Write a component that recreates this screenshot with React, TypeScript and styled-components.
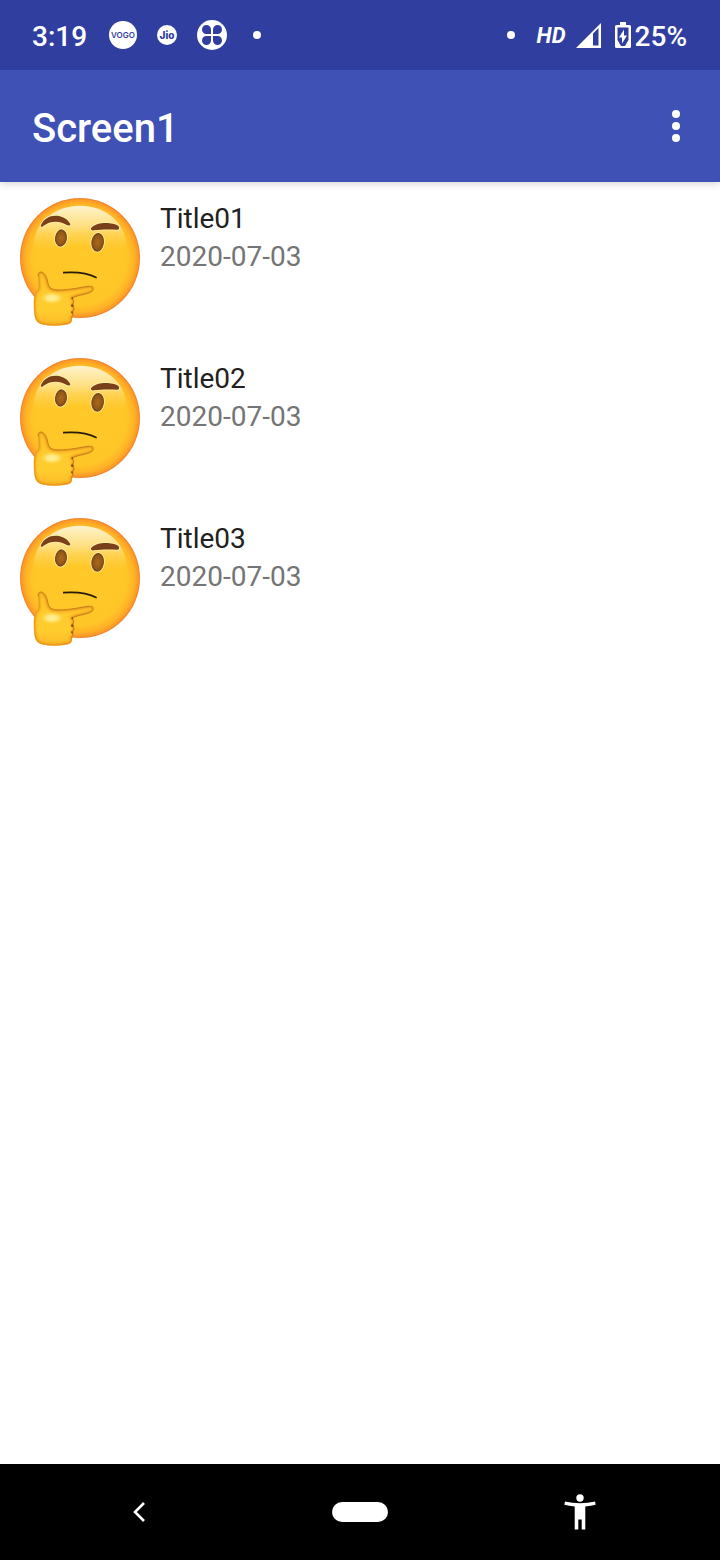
import React from "react";
import styled, { createGlobalStyle } from "styled-components";

const GlobalStyle = createGlobalStyle`
  *, *::before, *::after { box-sizing: border-box; }
  body { margin: 0; background: #fff; font-family: Roboto, "Liberation Sans", sans-serif; }
`;

const Screen = styled.div`
  display: flex;
  flex-direction: column;
  min-height: 100vh;
`;

const StatusBar = styled.div`
  position: relative;
  z-index: 1;
  display: flex;
  align-items: center;
  justify-content: space-between;
  height: 70px;
  padding: 0 32px;
  background: #303f9f;
  color: #fff;
`;

const StatusGroup = styled.div<{ $gap: number }>`
  display: flex;
  align-items: center;
  gap: ${(p) => p.$gap}px;
`;

const StatusText = styled.span`
  font-size: 28px;
  font-weight: 500;
  line-height: 32px;
  padding-top: 4px;
`;

const Clock = styled(StatusText)`
  padding-right: 2px;
`;

const NetworkLabel = styled.span`
  font-size: 22px;
  font-weight: 700;
  font-style: italic;
  line-height: 26px;
  padding: 2px 10px 0 22px;
`;

const Battery = styled.div`
  display: flex;
  align-items: center;
  gap: 4px;
  padding: 0 1px 0 14px;
`;

const Dot = styled.span`
  width: 8px;
  height: 8px;
  border-radius: 50%;
  background: #fff;
`;

const NotificationDot = styled(Dot)`
  margin-left: 6px;
`;

const AppBar = styled.header`
  display: flex;
  align-items: center;
  justify-content: space-between;
  height: 112px;
  padding: 0 20px 0 32px;
  background: #3f51b5;
  color: #fff;
  box-shadow: 0 1px 8px rgba(0, 0, 0, 0.2);
`;

const AppTitle = styled.h1`
  margin: 0;
  padding-top: 6px;
  font-size: 40px;
  font-weight: 500;
  line-height: 48px;
`;

const IconButton = styled.button`
  display: flex;
  align-items: center;
  justify-content: center;
  justify-self: center;
  width: 48px;
  height: 48px;
  padding: 0;
  border: 0;
  background: none;
  color: inherit;
`;

const List = styled.ul`
  flex: 1;
  margin: 0;
  padding: 0;
  list-style: none;
`;

const Item = styled.li`
  display: flex;
  gap: 20px;
  padding: 16px 20px;
`;

const Picture = styled.svg`
  display: block;
  flex: none;
  width: 120px;
  height: 128px;
`;

const ItemText = styled.div`
  padding-top: 2px;
  font-size: 28px;
  line-height: 38px;
`;

const ItemTitle = styled.div`
  color: #212121;
`;

const ItemDate = styled.div`
  color: #757575;
`;

const NavBar = styled.nav`
  display: grid;
  grid-template-columns: repeat(3, 1fr);
  align-items: center;
  height: 96px;
  padding: 0 30px;
  background: #000;
  color: #fff;
`;

const HomePill = styled.span`
  width: 56px;
  height: 20px;
  border-radius: 10px;
  background: #fff;
`;

const HomeButton = styled(IconButton)`
  width: 56px;
`;

const VogoIcon = () => (
  <svg width="28" height="28" viewBox="0 0 28 28">
    <circle cx="14" cy="14" r="14" fill="#fff" />
    <text x="14" y="17" textAnchor="middle" fontFamily="Inter, sans-serif" fontSize="8" fontWeight="600" fill="#303f9f">VOGO</text>
  </svg>
);

const JioIcon = () => (
  <svg width="20" height="20" viewBox="0 0 20 20">
    <circle cx="10" cy="10" r="10" fill="#fff" />
    <text x="10" y="14" textAnchor="middle" fontFamily="Inter, sans-serif" fontSize="10" fontWeight="800" fill="#303f9f">Jio</text>
  </svg>
);

const CloverIcon = () => (
  <svg width="30" height="30" viewBox="0 0 30 30">
    <circle cx="15" cy="15" r="15" fill="#fff" />
    <g fill="#303f9f">
      {[0, 90, 180, 270].map((angle) => (
        <path
          key={angle}
          transform={`rotate(${angle} 15 15)`}
          d="M14 14H9.4A4.5 4.5 0 1 1 14 9.4Z"
        />
      ))}
    </g>
  </svg>
);

const SignalIcon = () => (
  <svg width="25" height="25" viewBox="0 0 25 25">
    <path fill="#fff" fillRule="evenodd" d="M0 25 25 0V25ZM17 10.5V22.5H22.5V5Z" />
  </svg>
);

const BatteryIcon = () => (
  <svg width="16" height="26" viewBox="0 0 16 26">
    <path fill="#fff" d="M5 0h6v3h3.500q1.500 0 1.500 1.500v20q0 1.500-1.500 1.500h-13Q0 26 0 24.500v-20Q0 3 1.500 3H5Z" />
    <path fill="#303f9f" d="M2.500 5.500h11V18L10 24H6l-3.500-6Z" />
    <path fill="#fff" d="M9 7.500 4 15.500H7V21.500L12 13.500H9Z" />
  </svg>
);

const MoreIcon = () => (
  <svg width="8" height="32" viewBox="0 0 8 32" fill="currentColor">
    <circle cx="4" cy="4" r="4" />
    <circle cx="4" cy="16" r="4" />
    <circle cx="4" cy="28" r="4" />
  </svg>
);

const BackIcon = () => (
  <svg width="16" height="20" viewBox="0 0 16 20" fill="none" stroke="currentColor" strokeWidth="2.600">
    <path d="M12 1 3 10l9 9" />
  </svg>
);

const AccessibilityIcon = () => (
  <svg width="32" height="36" viewBox="0 0 32 36" fill="currentColor">
    <circle cx="16" cy="4" r="3.700" />
    <path d="M1 7.500Q8 9.300 16 9.300T31 7.500L31.700 10.700Q27 12 21.300 12.500V35.500H17.700V25.500H14.300V35.500H10.700V12.500Q5 12 .3 10.700Z" />
  </svg>
);

const HAND =
  "M84 257C84 249 88 245 94 246C106 249 111 264 114 279C116 291 122 297 134 299C164 302 197 295 226 290C241 287 250 289 250 296C250 304 239 309 226 312C208 316 193 320 187 324C193 331 194 338 189 345C197 353 196 361 189 366C195 372 194 379 186 383C188 396 181 402 166 404C145 408 121 408 101 404C83 400 75 392 73 371C71 351 70 329 74 315C77 303 88 300 86 286Z";

const ThinkingFace = ({ id }: { id: string }) => {
  const ref = (name: string) => `url(#${name}-${id})`;
  return (
    <Picture viewBox="30 24 360 384" role="img" aria-label="Thinking face">
      <defs>
        <radialGradient id={`face-${id}`} cx="0.5" cy="0.5" r="0.5">
          <stop offset="0" stopColor="#ffc928" />
          <stop offset="0.780" stopColor="#ffc628" />
          <stop offset="0.900" stopColor="#ffb426" />
          <stop offset="0.970" stopColor="#fc9a26" />
          <stop offset="1" stopColor="#ee7d2c" />
        </radialGradient>
        <linearGradient id={`shine-${id}`} x1="0" y1="0" x2="0" y2="1">
          <stop offset="0" stopColor="#fff4d0" />
          <stop offset="0.450" stopColor="#ffe596" stopOpacity="0.850" />
          <stop offset="1" stopColor="#ffcf40" stopOpacity="0.150" />
        </linearGradient>
        <radialGradient id={`eye-${id}`}>
          <stop offset="0" stopColor="#a8681e" />
          <stop offset="0.700" stopColor="#925719" />
          <stop offset="1" stopColor="#704014" />
        </radialGradient>
        <linearGradient id={`hand-${id}`} x1="0" y1="0" x2="0" y2="1">
          <stop offset="0" stopColor="#ffc62a" />
          <stop offset="0.700" stopColor="#ffcd2e" />
          <stop offset="1" stopColor="#fdba26" />
        </linearGradient>
        <radialGradient id={`glow-${id}`}>
          <stop offset="0" stopColor="#fff2a0" />
          <stop offset="0.450" stopColor="#ffec88" stopOpacity="0.850" />
          <stop offset="1" stopColor="#ffd23c" stopOpacity="0" />
        </radialGradient>
        <clipPath id={`hand-clip-${id}`}>
          <path d={HAND} />
        </clipPath>
      </defs>
      <circle cx="210" cy="204" r="180" fill={ref("face")} />
      <path fill={ref("shine")} d="M72 150C84 88 140 47 210 47S336 88 348 150C352 176 326 180 298 174C240 164 180 164 122 174C94 180 68 176 72 150Z" />
      <g stroke="#fff0a8" strokeWidth="5" style={{ paintOrder: "stroke" }}>
        <ellipse cx="153" cy="144" rx="18" ry="26" transform="rotate(7 153 144)" fill={ref("eye")} />
        <ellipse cx="263" cy="157" rx="19" ry="28" transform="rotate(7 263 157)" fill={ref("eye")} />
        <path fill="#79401a" d="M93 105C101 86 119 76 140 77C160 79 174 88 181 102C181 107 176 108 169 104C154 95 137 93 122 97C110 100 103 107 97 110C93 111 91 109 93 105Z" />
        <path fill="#79401a" d="M244 113C256 101 275 98 293 99C308 100 320 103 326 109C329 116 327 119 322 119C296 118 272 118 252 121C244 122 241 118 244 113Z" />
      </g>
      <path d="M159 248C198 245 231 248 260 263" fill="none" stroke="#281c0c" strokeWidth="5" />
      <path d={HAND} fill={ref("hand")} />
      <g clipPath={ref("hand-clip")} fill="none" strokeLinejoin="round">
        <path d={HAND} stroke="#f5a21c" strokeWidth="22" opacity="0.250" />
        <path d={HAND} stroke="#ee951c" strokeWidth="14" opacity="0.300" />
        <path d={HAND} stroke="#df861c" strokeWidth="8" opacity="0.500" />
      </g>
      <path
        fill="none"
        stroke="#b8721c"
        strokeWidth="3"
        strokeLinecap="round"
        opacity="0.750"
        d="M84 257C84 249 88 245 94 246C106 249 111 264 114 279C116 291 122 297 134 299C164 302 197 295 226 290C241 287 250 289 250 296C250 304 239 309 226 312C206 317 194 319 187 324Q195 335 187 346Q195 357 187 367Q192 376 185 382"
      />
      <g fill="#8a4f16">
        <circle cx="187" cy="325" r="3" />
        <circle cx="187" cy="347" r="4" />
        <circle cx="186" cy="367" r="3" />
      </g>
      <ellipse cx="126" cy="324" rx="38" ry="20" fill={ref("glow")} />
    </Picture>
  );
};

const items = [
  { title: "Title01", date: "2020-07-03" },
  { title: "Title02", date: "2020-07-03" },
  { title: "Title03", date: "2020-07-03" },
];

export default function App() {
  return (
    <Screen>
      <GlobalStyle />
      <StatusBar>
        <StatusGroup $gap={20}>
          <Clock>3:19</Clock>
          <VogoIcon />
          <JioIcon />
          <CloverIcon />
          <NotificationDot />
        </StatusGroup>
        <StatusGroup $gap={0}>
          <Dot />
          <NetworkLabel>HD</NetworkLabel>
          <SignalIcon />
          <Battery>
            <BatteryIcon />
            <StatusText>25%</StatusText>
          </Battery>
        </StatusGroup>
      </StatusBar>
      <AppBar>
        <AppTitle>Screen1</AppTitle>
        <IconButton type="button" aria-label="More options">
          <MoreIcon />
        </IconButton>
      </AppBar>
      <List>
        {items.map((item) => (
          <Item key={item.title}>
            <ThinkingFace id={item.title} />
            <ItemText>
              <ItemTitle>{item.title}</ItemTitle>
              <ItemDate>{item.date}</ItemDate>
            </ItemText>
          </Item>
        ))}
      </List>
      <NavBar>
        <IconButton type="button" aria-label="Back">
          <BackIcon />
        </IconButton>
        <HomeButton type="button" aria-label="Home">
          <HomePill />
        </HomeButton>
        <IconButton type="button" aria-label="Accessibility">
          <AccessibilityIcon />
        </IconButton>
      </NavBar>
    </Screen>
  );
}
